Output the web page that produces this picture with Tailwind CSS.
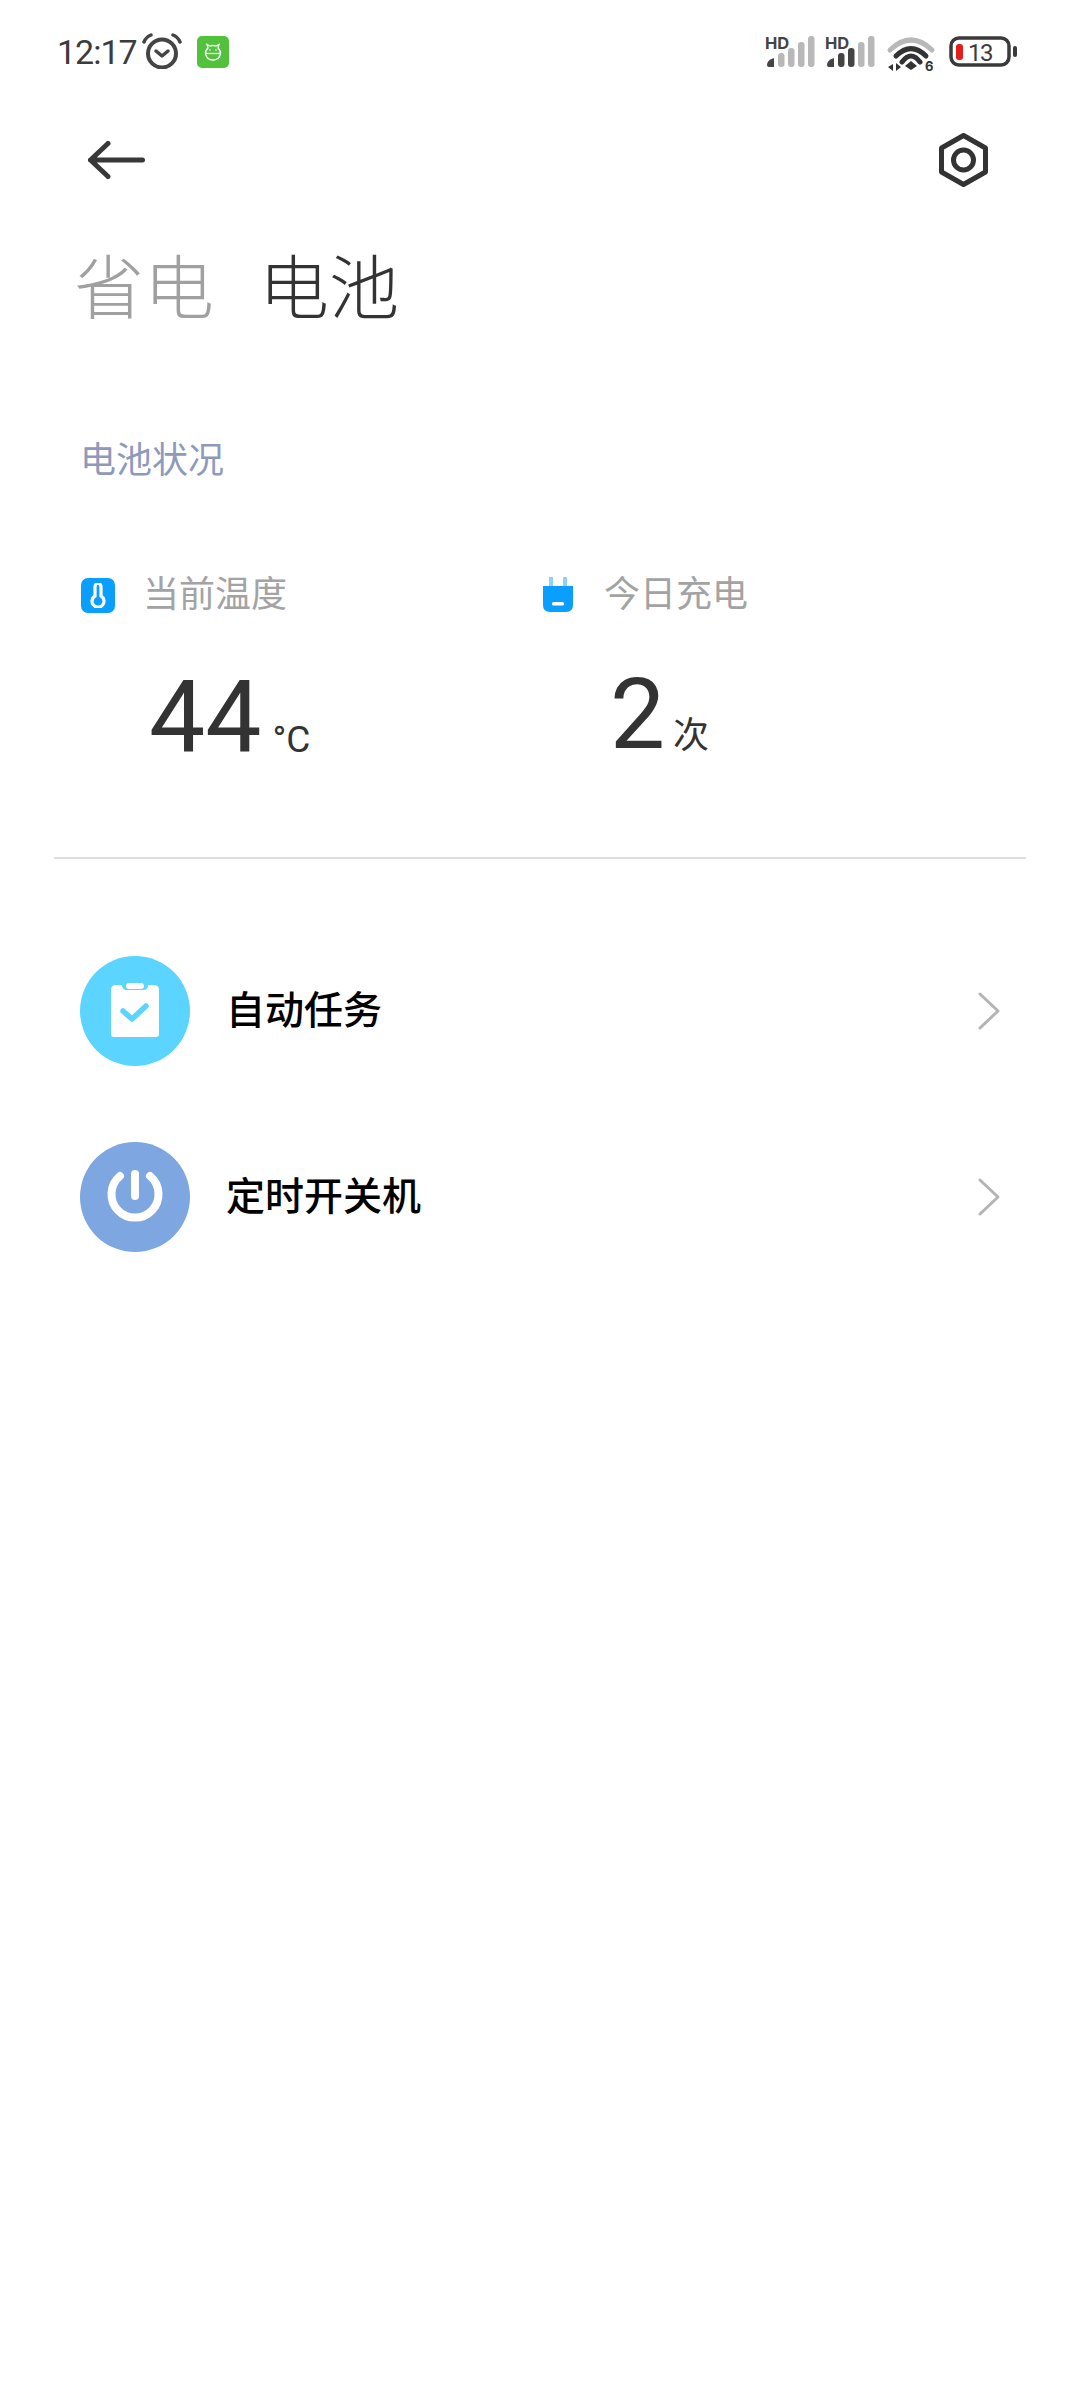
<!DOCTYPE html>
<html lang="zh">
<head>
<meta charset="utf-8">
<script src="https://cdn.jsdelivr.net/npm/@tailwindcss/browser@4"></script>
</head>
<body class="bg-white">
<div class="w-[1080px] h-[2400px] bg-white flex flex-col font-['Roboto','Noto_Sans_CJK_SC',sans-serif] overflow-hidden">

  <!-- status bar -->
  <div class="h-[104px] flex items-start justify-between pl-[57px] pr-[62px] pt-[33px]">
    <div class="flex items-start">
      <span class="text-[34px] leading-[38px] tracking-[-1px] text-[#3c3c3c] w-[85px] whitespace-nowrap">12:17</span>
      <svg class="w-[40px] h-[36px]" viewBox="0 0 40 36" fill="none" stroke="#444" stroke-linecap="round">
        <circle cx="20" cy="20.500" r="14" stroke-width="4"/>
        <path d="M14 18l6 5 6-5" stroke-width="3.500" stroke-linejoin="round"/>
        <path d="M2 9Q4 4 9 2M31 2Q36 4 38 9" stroke-width="3.500"/>
      </svg>
      <div class="w-[32px] h-[32px] ml-[15px] mt-[3px] rounded-[5px] bg-[#52c23d] flex items-center justify-center">
        <svg class="w-[20px] h-[20px]" viewBox="0 0 20 20" fill="none" stroke="#fff" stroke-width="1.300">
          <path d="M5 6L4 2.500 7 4Q10 3 13 4L16 2.500 15 6Q18 9 17.500 12 16 18 10 18 4 18 2.500 12 2 9 5 6Z"/>
          <path d="M2.500 11.500h15"/>
          <circle cx="7" cy="8" r=".8" fill="#fff" stroke="none"/>
          <circle cx="13" cy="8" r=".8" fill="#fff" stroke="none"/>
        </svg>
      </div>
    </div>
    <div class="flex items-start">
      <svg class="w-[51px] h-[36px] mt-[3px] overflow-visible" viewBox="0 0 51 36">
        <text x="0" y="13" font-family="Inter" font-size="16.500" font-weight="700" fill="#444">HD</text>
        <path d="M2 29q0-5 7-7v9H4q-2 0-2-2Z" fill="#444"/>
        <rect x="13" y="17" width="6.500" height="14" rx="3" fill="#b8b8b8"/>
        <rect x="23" y="12" width="6.500" height="19" rx="3" fill="#b8b8b8"/>
        <rect x="33" y="6" width="6.500" height="25" rx="3" fill="#b8b8b8"/>
        <rect x="43" y="0" width="6.500" height="31" rx="3" fill="#b8b8b8"/>
      </svg>
      <svg class="w-[51px] h-[36px] ml-[9px] mt-[3px] overflow-visible" viewBox="0 0 51 36">
        <text x="0" y="13" font-family="Inter" font-size="16.500" font-weight="700" fill="#444">HD</text>
        <path d="M2 29q0-5 7-7v9H4q-2 0-2-2Z" fill="#444"/>
        <rect x="13" y="17" width="6.500" height="14" rx="3" fill="#444"/>
        <rect x="23" y="12" width="6.500" height="19" rx="3" fill="#444"/>
        <rect x="33" y="6" width="6.500" height="25" rx="3" fill="#b8b8b8"/>
        <rect x="43" y="0" width="6.500" height="31" rx="3" fill="#b8b8b8"/>
      </svg>
      <svg class="w-[48px] h-[36px] ml-[12px] mt-[3px] overflow-visible" viewBox="0 0 48 36" fill="none" stroke-linecap="round">
        <path d="M2 14Q23 -6 44 14" stroke="#b8b8b8" stroke-width="5"/>
        <path d="M8 20Q23 5 38 20" stroke="#333" stroke-width="5"/>
        <path d="M14 26Q23 14 32 26" stroke="#333" stroke-width="5"/>
        <path d="M17 30L23 25 29 30 23 34Z" fill="#333"/>
        <path d="M0 31l5-3v7zM8 27v8l5-4z" fill="#333"/>
        <text x="37" y="35" font-family="Inter" font-size="13" font-weight="700" fill="#333">6</text>
      </svg>
      <svg class="w-[69px] h-[36px] ml-[13px] mt-[3px] overflow-visible" viewBox="0 0 69 36">
        <rect x="2" y="2" width="58" height="27" rx="8" fill="none" stroke="#3a3a3a" stroke-width="3.500"/>
        <rect x="7" y="8" width="7" height="16" rx="3" fill="#e41c1c"/>
        <text x="19" y="24.500" font-family="Roboto" font-size="24" letter-spacing="-1.500" fill="#3c3c3c">13</text>
        <rect x="64" y="10" width="4" height="11" rx="2" fill="#3a3a3a"/>
      </svg>
    </div>
  </div>

  <!-- action bar -->
  <div class="h-[112px] flex items-center justify-between pl-[88px] pr-[92px]">
    <svg class="w-[57px] h-[38px]" viewBox="0 0 57 38" fill="none" stroke="#383838" stroke-width="5" stroke-linecap="round" stroke-linejoin="round">
      <path d="M20 2.500L2.500 19 20 35.500M2.500 19H54.500"/>
    </svg>
    <svg class="w-[49px] h-[54px]" viewBox="0 0 49 54" fill="none" stroke="#333" stroke-width="5" stroke-linejoin="round">
      <path d="M24.500 2.500L46.500 15V39L24.500 51.500 2.500 39V15Z"/>
      <circle cx="24.500" cy="27" r="10"/>
    </svg>
  </div>

  <!-- tabs -->
  <div class="flex items-center gap-[45px] pl-[74px] h-[148px] text-[70px] leading-none font-light">
    <span class="text-[#a0a0a0]">省电</span>
    <span class="text-[#333333]">电池</span>
  </div>

  <!-- section title -->
  <div class="mt-[73px] pl-[80px] text-[36px] leading-[48px] text-[#8e9abb]">电池状况</div>

  <!-- stats -->
  <div class="mt-[92px] h-[186px] flex">
    <div class="w-[462px] pl-[81px] flex flex-col">
      <div class="flex items-center h-[36px]">
        <div class="w-[34px] h-[35px] rounded-[7px] bg-[#0a9eff] flex items-center justify-center">
          <svg class="w-[16px] h-[25px]" viewBox="0 0 16 25" fill="none" stroke="#fff" stroke-width="3.200">
            <path d="M5 3.500a3 3 0 0 1 6 0V13a6 6 0 1 1-6 0Z"/>
          </svg>
        </div>
        <span class="ml-[28px] text-[36px] leading-[48px] text-[#a3a3a3]">当前温度</span>
      </div>
      <div class="flex items-baseline mt-[60px] pl-[68px] h-[90px]">
        <span class="text-[100px] leading-[90px] text-[#333333]">44</span>
        <span class="ml-[11px] text-[37px] leading-none text-[#333333] font-normal">°C</span>
      </div>
    </div>
    <div class="pl-[81px] flex flex-col">
      <div class="flex items-center h-[36px]">
        <svg class="w-[30px] h-[36px]" viewBox="0 0 30 36">
          <rect x="6" y="0" width="4" height="10" fill="#8fd0ff"/>
          <rect x="20" y="0" width="4" height="10" fill="#8fd0ff"/>
          <path d="M0 9H30V28Q30 35 23 35H7Q0 35 0 28Z" fill="#0a9eff"/>
          <rect x="9" y="25" width="12" height="3.500" rx="1.500" fill="#fff"/>
        </svg>
        <span class="ml-[31px] text-[36px] leading-[48px] text-[#a3a3a3]">今日充电</span>
      </div>
      <div class="flex items-baseline mt-[57px] pl-[67px] h-[90px]">
        <span class="text-[98px] leading-[90px] text-[#333333]">2</span>
        <span class="ml-[8px] text-[36px] leading-none text-[#333333]">次</span>
      </div>
    </div>
  </div>

  <!-- divider -->
  <div class="mt-[94px] mx-[54px] h-[2px] bg-[#dfdfdf]"></div>

  <!-- rows -->
  <div class="mt-[97px] flex flex-col gap-[76px] pl-[80px] pr-[79px]">
    <div class="h-[110px] flex items-center">
      <svg class="w-[110px] h-[110px] shrink-0" viewBox="0 0 110 110">
        <circle cx="55" cy="55" r="55" fill="#5bd4ff"/>
        <path d="M36 29h6q0 5 5 5h16q5 0 5-5h6q5 0 5 5v44q0 3-3 3H34q-3 0-3-3V34q0-5 5-5Z" fill="#fff"/>
        <rect x="46" y="27" width="18" height="6" rx="3" fill="#fff"/>
        <path d="M43 55l9 8 14-13" fill="none" stroke="#5bd4ff" stroke-width="5.500" stroke-linecap="round" stroke-linejoin="round"/>
      </svg>
      <span class="ml-[36px] text-[39px] leading-[50px] font-medium text-black flex-1">自动任务</span>
      <svg class="w-[24px] h-[40px]" viewBox="0 0 24 40" fill="none" stroke="#b4b4b4" stroke-width="3" stroke-linecap="round" stroke-linejoin="round">
        <path d="M3 3L21 20 3 37"/>
      </svg>
    </div>
    <div class="h-[110px] flex items-center">
      <svg class="w-[110px] h-[110px] shrink-0" viewBox="0 0 110 110">
        <circle cx="55" cy="55" r="55" fill="#7ea6e0"/>
        <path d="M40 34A23.500 23.500 0 1 0 70 34" fill="none" stroke="#fff" stroke-width="8" stroke-linecap="round"/>
        <path d="M55 32V54" fill="none" stroke="#fff" stroke-width="8" stroke-linecap="round"/>
      </svg>
      <span class="ml-[36px] text-[39px] leading-[50px] font-medium text-black flex-1">定时开关机</span>
      <svg class="w-[24px] h-[40px]" viewBox="0 0 24 40" fill="none" stroke="#b4b4b4" stroke-width="3" stroke-linecap="round" stroke-linejoin="round">
        <path d="M3 3L21 20 3 37"/>
      </svg>
    </div>
  </div>
</div>
</body>
</html>
